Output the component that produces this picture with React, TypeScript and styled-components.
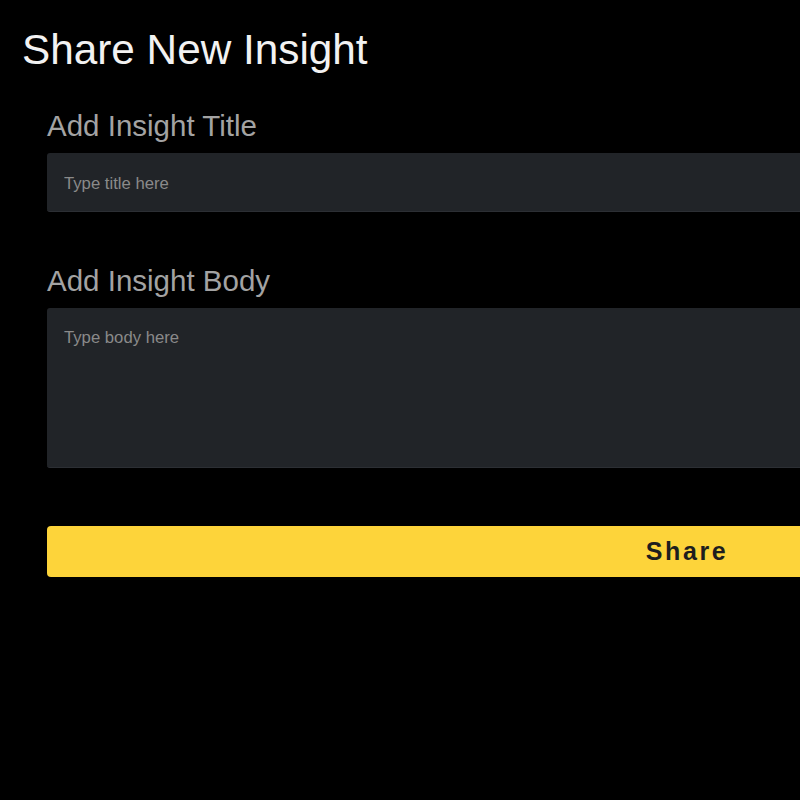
import React from "react";
import styled, { createGlobalStyle } from "styled-components";

const Global = createGlobalStyle`
  html, body {
    margin: 0;
    padding: 0;
    background: #000;
    overflow: hidden;
  }
  body {
    font-family: "Liberation Sans", Arial, sans-serif;
  }
`;

const Page = styled.div`
  width: 800px;
  height: 800px;
  background: #000;
  overflow: hidden;
  padding: 24px 0 0 22px;
  box-sizing: border-box;
`;

const Heading = styled.h1`
  margin: 0;
  font-size: 42.3px;
  font-weight: 400;
  line-height: 52px;
  color: #f2f2f2;
`;

const Form = styled.form`
  width: 1280px;
  margin: 32px 0 0 25px;
  display: flex;
  flex-direction: column;
`;

const Field = styled.div<{ $gap: number }>`
  display: flex;
  flex-direction: column;
  margin-bottom: ${(p) => p.$gap}px;
`;

const Label = styled.label`
  font-size: 29.5px;
  line-height: 36px;
  color: #a3a3a3;
  margin-bottom: 9px;
`;

const fieldStyles = `
  width: 100%;
  box-sizing: border-box;
  background: #212428;
  border: none;
  border-bottom: 1px solid #2c2f34;
  border-radius: 3px;
  color: #ddd;
  font-family: "Liberation Sans", Arial, sans-serif;
  font-size: 16.7px;
  padding: 3px 17px 0;
  outline: none;
  &::placeholder {
    color: #8a8a8a;
  }
`;

const TextInput = styled.input`
  ${fieldStyles}
  height: 59px;
`;

const TextArea = styled.textarea`
  ${fieldStyles}
  height: 160px;
  padding-top: 20px;
  resize: none;
  line-height: 20px;
`;

const ShareButton = styled.button`
  width: 100%;
  height: 51px;
  background: #fdd43a;
  border: none;
  border-radius: 4px;
  color: #1e1e1e;
  font-family: "Liberation Sans", Arial, sans-serif;
  font-size: 25px;
  font-weight: 700;
  letter-spacing: 2.6px;
  cursor: pointer;
`;

export default function App() {
  return (
    <>
      <Global />
      <Page>
        <Heading>Share New Insight</Heading>
        <Form onSubmit={(e) => e.preventDefault()}>
          <Field $gap={51}>
            <Label htmlFor="title">Add Insight Title</Label>
            <TextInput id="title" placeholder="Type title here" />
          </Field>
          <Field $gap={58}>
            <Label htmlFor="body">Add Insight Body</Label>
            <TextArea id="body" placeholder="Type body here" />
          </Field>
          <ShareButton type="submit">Share</ShareButton>
        </Form>
      </Page>
    </>
  );
}
